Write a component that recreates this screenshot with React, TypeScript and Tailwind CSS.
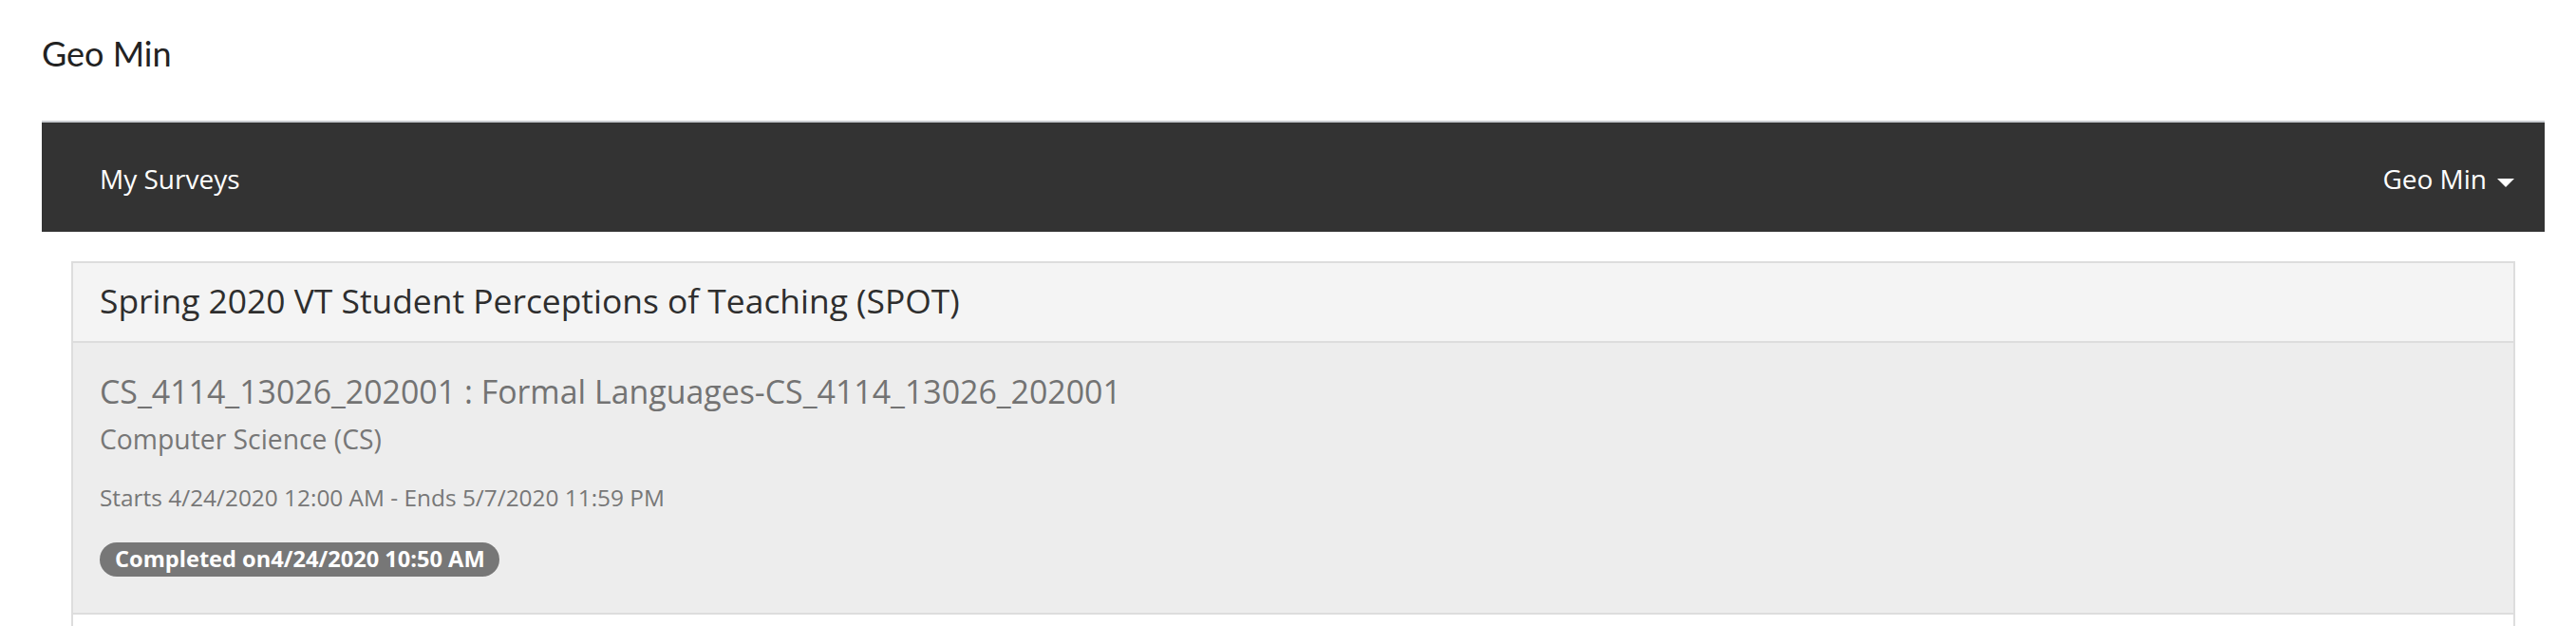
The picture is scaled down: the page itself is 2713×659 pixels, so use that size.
import React from 'react';

// Survey list page: user name heading, dark nav bar, and a panel of surveys.

interface Survey {
  code: string;
  department: string;
  window: string;
  completed: string;
}

const surveys: Survey[] = [
  {
    code: 'CS_4114_13026_202001 : Formal Languages-CS_4114_13026_202001',
    department: 'Computer Science (CS)',
    window: 'Starts 4/24/2020 12:00 AM - Ends 5/7/2020 11:59 PM',
    completed: 'Completed on4/24/2020 10:50 AM',
  },
];

function NavBar() {
  return (
    <nav className="mt-[49px] flex h-[117px] items-center justify-between border-t-2 border-[#c9ccd0] bg-[#333333] pt-[3px] pl-[61px] pr-[32px] text-[28px] leading-[38px] text-white">
      <a className="cursor-pointer">My Surveys</a>
      <button className="flex items-center gap-[11px]">
        <span>Geo Min</span>
        <span className="mt-[8px] h-0 w-0 border-x-[9px] border-t-[9px] border-x-transparent border-t-white" />
      </button>
    </nav>
  );
}

function SurveyItem({ survey }: { survey: Survey }) {
  return (
    <div className="border-b-2 border-[#dddddd] bg-[#ededed] pt-[28px] pb-[38px] pl-[28px] text-[#777777]">
      <h4 className="text-[33.9px] leading-[46px] text-[#737373]">{survey.code}</h4>
      <div className="mt-[8px] text-[28.3px] leading-[38px]">{survey.department}</div>
      <div className="mt-[26px] text-[24.4px] leading-[33px]">{survey.window}</div>
      <span className="mt-[31px] inline-flex h-[36px] items-center rounded-full bg-[#777777] pl-[16px] pr-[15px] text-[23.6px] font-bold text-white">
        {survey.completed}
      </span>
    </div>
  );
}

export default function App() {
  return (
    <div className="min-h-screen bg-white" style={{ fontFamily: '"Open Sans", sans-serif' }}>
      <div className="pl-[44px] pr-[33px]">
        <h1
          className="pt-[35px] text-[36px] leading-[43px] text-[#222222]"
          style={{ fontFamily: 'Lato, sans-serif' }}
        >
          Geo Min
        </h1>
        <NavBar />
        <div className="px-[31px] pt-[31px]">
          <div className="border-2 border-[#dddddd]">
            <div className="border-b-2 border-[#dddddd] bg-[#f4f4f4] pt-[15px] pb-[19px] pl-[28px] text-[35.4px] leading-[48px] text-[#2e2e2e]">
              Spring 2020 VT Student Perceptions of Teaching (SPOT)
            </div>
            {surveys.map((s) => (
              <SurveyItem key={s.code} survey={s} />
            ))}
            <div className="h-[120px] bg-white" />
          </div>
        </div>
      </div>
    </div>
  );
}
